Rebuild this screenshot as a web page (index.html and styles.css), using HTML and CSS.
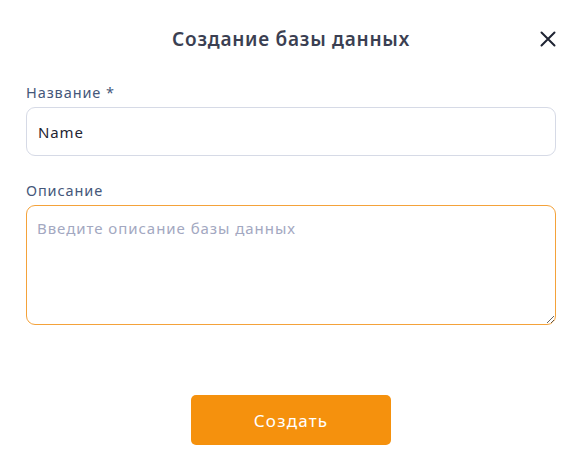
FILE: index.html
```html
<!DOCTYPE html>
<html lang="ru">
<head>
<meta charset="utf-8">
<link rel="stylesheet" href="styles.css">
</head>
<body>
<div class="modal">
  <div class="header">
    <h1 class="title">Создание базы данных</h1>
    <button class="close" aria-label="Закрыть">
      <svg width="16" height="16" viewBox="0 0 16 16"><path d="M1.5 1.5 L14.5 14.5 M14.5 1.5 L1.5 14.5" stroke="#1f2433" stroke-width="2" stroke-linecap="round"/></svg>
    </button>
  </div>
  <div class="field">
    <label class="label">Название *</label>
    <input class="input" type="text" value="Name">
  </div>
  <div class="field field-desc">
    <label class="label">Описание</label>
    <textarea class="textarea" placeholder="Введите описание базы данных" autofocus></textarea>
  </div>
  <div class="actions">
    <button class="submit">Создать</button>
  </div>
</div>
</body>
</html>
```
FILE: styles.css
```css
* { box-sizing: border-box; }
html, body { margin: 0; background: #fff; }
body { font-family: "Noto Sans", "DejaVu Sans", sans-serif; }
.modal { width: 578px; height: 467px; padding: 24px 22px 0 26px; display: flex; flex-direction: column; }
.header { position: relative; display: flex; justify-content: center; align-items: center; height: 30px; margin-bottom: 28px; }
.title { margin: 0; font-size: 19px; font-weight: 600; color: #3b3f52; letter-spacing: 0.75px; }
.close { position: absolute; right: 0; top: 7px; width: 16px; height: 16px; padding: 0; border: 0; background: none; display: flex; }
.field { display: flex; flex-direction: column; width: 530px; }
.label { font-size: 14.5px; color: #45577a; line-height: 20px; margin-bottom: 5px; letter-spacing: 0.9px; }
.input { height: 49px; border: 1px solid #d6dae6; border-radius: 9px; padding: 0 11px; font-family: inherit; font-size: 15px; color: #1f2433; outline: none; letter-spacing: 0.9px; }
.field-desc { margin-top: 24px; }
.textarea { height: 120px; border: 1px solid #f4a23a; border-radius: 9px; padding: 12px 10px; font-family: inherit; font-size: 15px; color: #1f2433; outline: none; resize: vertical; letter-spacing: 0.95px; }
.textarea::placeholder { color: #a3a8c1; }
.actions { display: flex; justify-content: center; margin-top: 70px; }
.submit { width: 200px; height: 50px; border: 0; border-radius: 5px; background: #f5910d; color: #fff; font-family: inherit; font-size: 17px; letter-spacing: 1.2px; }
```
